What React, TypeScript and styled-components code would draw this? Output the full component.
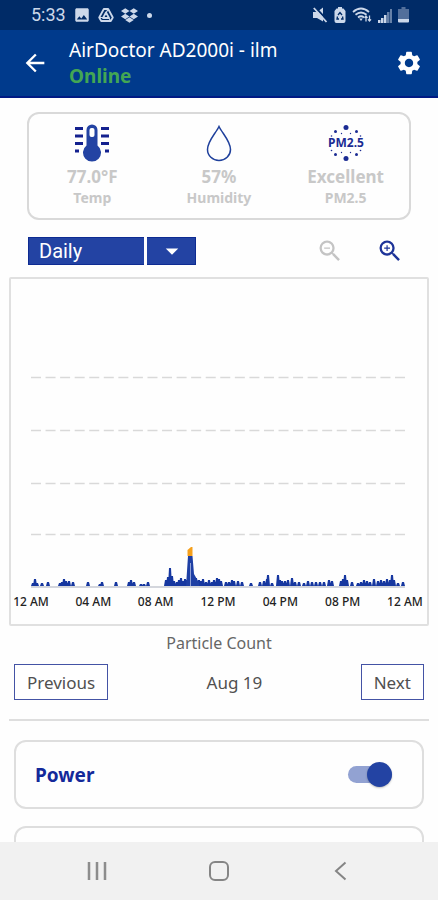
import React, { useState } from 'react';
import styled, { createGlobalStyle } from 'styled-components';
import { MdArrowBack, MdSettings, MdZoomIn, MdZoomOut, MdArrowDropDown, MdImage } from 'react-icons/md';
import { FaDropbox } from 'react-icons/fa';

const GlobalStyle = createGlobalStyle`
  * { box-sizing: border-box; }
  body { margin: 0; background: #fefefe; font-family: "Noto Sans", "Open Sans", sans-serif; }
  button, select { font: inherit; }
`;

const Screen = styled.div`
  display: flex;
  flex-direction: column;
  height: 100vh;
`;

const StatusBar = styled.div`
  display: flex;
  flex: none;
  align-items: center;
  justify-content: space-between;
  height: 30px;
  padding: 0 29px 0 31px;
  background: #002b67;
  color: #ccd8ea;
`;

const StatusGroup = styled.div<{ $gap: number }>`
  display: flex;
  align-items: center;
  gap: ${(p) => p.$gap}px;
`;

const Clock = styled.span`
  font-family: Roboto, sans-serif;
  font-size: 18px;
  line-height: 24px;
`;

const Dot = styled.span`
  width: 5px;
  height: 5px;
  margin-left: 2px;
  border-radius: 50%;
  background: currentColor;
`;

const AppBar = styled.header`
  display: flex;
  flex: none;
  align-items: center;
  height: 68px;
  padding: 0 15px 0 21px;
  border-bottom: 2px solid #001a84;
  background: #003a8c;
  color: #fff;
`;

const BarButton = styled.button`
  display: flex;
  padding: 0;
  border: 0;
  background: none;
  color: inherit;
  cursor: pointer;
`;

const Titles = styled.div`
  flex: 1;
  padding-left: 20px;
`;

const DeviceName = styled.h1`
  margin: 0;
  font-size: 19px;
  font-weight: 400;
  line-height: 26px;
`;

const DeviceState = styled.p`
  margin: 0;
  color: #43a654;
  font-size: 19px;
  font-weight: 700;
  line-height: 26px;
`;

const Content = styled.main`
  flex: 1;
  min-height: 0;
  overflow: hidden;
`;

const Readings = styled.section`
  display: grid;
  grid-template-columns: repeat(3, 1fr);
  margin: 14px 27px 16px;
  padding: 10px 0;
  border: 2px solid #d9d9d9;
  border-radius: 12px;
`;

const Reading = styled.div`
  display: flex;
  flex-direction: column;
  align-items: center;
  color: #c8c8c8;
  font-weight: 700;
`;

const ReadingValue = styled.span`
  margin-top: 4px;
  font-size: 17px;
  line-height: 22px;
`;

const ReadingLabel = styled.span`
  font-size: 14px;
  line-height: 20px;
`;

const Toolbar = styled.div`
  display: flex;
  align-items: center;
  gap: 32px;
  height: 30px;
  padding: 0 34px 0 28px;
`;

const Picker = styled.div`
  position: relative;
  display: grid;
  grid-template-columns: 116px 50px;
  gap: 2px;
  height: 28px;
  margin-right: auto;
  color: #fff;
`;

const PickerSelect = styled.select`
  grid-column: 1 / 3;
  padding: 0 10px;
  border: 1px solid #0e2b92;
  background: #2343a3;
  color: inherit;
  font-family: Roboto, sans-serif;
  font-size: 20px;
  line-height: 24px;
  appearance: none;
`;

const PickerArrow = styled.span`
  position: absolute;
  inset: 0 0 0 auto;
  display: flex;
  align-items: center;
  justify-content: center;
  width: 52px;
  border-left: 3px solid #fefefe;
  pointer-events: none;
`;

const ZoomButton = styled.button`
  display: flex;
  padding: 0;
  border: 0;
  background: none;
  color: #1d3398;
  &:disabled { color: #c4c4c4; }
`;

const ChartFrame = styled.figure`
  margin: 11px 9px 0;
  padding: 8px 0 13px;
  border: 2px solid #e0e0e0;
  border-radius: 2px;
`;

const Plot = styled.svg`
  display: block;
  width: calc(100% - 42px);
  height: 301px;
  margin: 0 auto 0 20px;
`;

const Axis = styled.div`
  display: flex;
  justify-content: space-between;
  padding: 5px 2px 0 0;
`;

const Tick = styled.span`
  width: 40px;
  color: #222;
  font-size: 12px;
  font-weight: 500;
  line-height: 18px;
  text-align: center;
  white-space: nowrap;
`;

const Caption = styled.p`
  margin: 5px 0 9px;
  color: #666;
  font-size: 16px;
  line-height: 24px;
  text-align: center;
`;

const Pager = styled.div`
  display: flex;
  align-items: center;
  justify-content: space-between;
  padding: 0 14px 19px;
  color: #505050;
  font-size: 17px;
`;

const PageButton = styled.button`
  height: 36px;
  padding: 0 12px;
  border: 1px solid #4453a5;
  background: #fff;
  color: inherit;
`;

const Divider = styled.hr`
  height: 2px;
  margin: 0 9px 19px;
  border: 0;
  background: #dedede;
`;

const Card = styled.section`
  display: flex;
  align-items: center;
  justify-content: space-between;
  height: 69px;
  margin: 0 14px 17px;
  padding: 0 30px 0 19px;
  border: 2px solid #dedede;
  border-radius: 12px;
`;

const CardLabel = styled.label`
  color: #14299a;
  font-size: 19px;
  font-weight: 700;
  line-height: 28px;
`;

const Switch = styled.input`
  display: flex;
  align-items: center;
  width: 44px;
  height: 26px;
  margin: 0;
  appearance: none;
  cursor: pointer;
  &::before {
    content: '';
    flex: 1;
    height: 17px;
    border-radius: 9px;
    background: #92a2d2;
  }
  &::after {
    content: '';
    width: 25px;
    height: 25px;
    margin-left: -25px;
    border-radius: 50%;
    background: #2343a3;
    box-shadow: 0 1px 2px rgba(0, 0, 0, 0.25);
  }
  &:not(:checked) { flex-direction: row-reverse; }
  &:not(:checked)::after { margin: 0 -25px 0 0; background: #999; }
`;

const NavBar = styled.nav`
  display: grid;
  flex: none;
  grid-template-columns: repeat(3, 1fr);
  height: 58px;
  padding: 0 36px;
  background: #f1f1f1;
`;

const NavButton = styled.button`
  display: flex;
  align-items: center;
  justify-content: center;
  padding: 0;
  border: 0;
  background: none;
`;

const DriveIcon = () => (
  <svg width="16" height="16" viewBox="0 0 16 16" fill="none" stroke="currentColor" strokeLinejoin="round">
    <path d="M5.8 2h4.4l4.6 8.5-2 3.5H3.2l-2-3.5z" strokeWidth="1.8" />
    <path d="M8 5.5l3 5.5H5z" strokeWidth="1.8" />
    <path d="M1.5 10.5h3.5M10.2 2.2L8 5.7M12.6 13.8L10.8 11" strokeWidth="1.2" />
  </svg>
);

const MuteIcon = () => (
  <svg width="15" height="16" viewBox="0 0 15 16">
    <path d="M0 5h4l6-4.500v14L4 11H0z" fill="currentColor" />
    <path d="M2 0L15 14" stroke="#002b67" strokeWidth="2" />
    <path d="M0.800 1L13.500 15" stroke="currentColor" strokeWidth="1.800" />
  </svg>
);

const BatterySaverIcon = () => (
  <svg width="12" height="16" viewBox="0 0 12 16">
    <path d="M4 0h4v1.500h1.500L11.500 4V14a2 2 0 0 1-2 2h-7a2 2 0 0 1-2-2V4l2-2.500H4z" fill="currentColor" />
    <path d="M4 8L6 5.500 8 8M8.500 9.500L9 12H7M5 12H3l.5-2.500" fill="none" stroke="#002b67" strokeWidth="1.300" />
  </svg>
);

const WifiIcon = () => (
  <svg width="20" height="16" viewBox="0 0 20 16" fill="none" stroke="currentColor" strokeWidth="1.8">
    <path d="M1 5Q9 -2 17 5M3.500 7.800Q9 3.200 14.500 7.800M6 10.500Q9 8 12 10.500" />
    <path d="M7.200 11.500h3.600L9 14z" fill="currentColor" stroke="none" />
    <path d="M14 14.500V9M12.500 10.800L14 9l1.500 1.800M17.500 8.500V14M16 12.300l1.500 1.800 1.500-1.800" strokeWidth="1.300" />
  </svg>
);

const SignalIcon = () => (
  <svg width="14" height="15" viewBox="0 0 14 15" fill="currentColor">
    <path d="M0 12h2.500v3H0zM3 10h2.500v5H3zM6 7h2.500v8H6z" />
    <path d="M9 4h2.500v11H9zM12 1h2v14h-2z" opacity="0.5" />
  </svg>
);

const BatteryIcon = () => (
  <svg width="11" height="16" viewBox="0 0 11 16" fill="currentColor">
    <path d="M3.500 0h4v2H11v10H0V2h3.500z" opacity="0.4" />
    <path d="M0 12h11v2.500a1 1 0 0 1-1 1H1a1 1 0 0 1-1-1z" />
  </svg>
);

const ThermometerIcon = () => (
  <svg width="36" height="38" viewBox="0 0 36 38">
    <path d="M12.500 6a5.500 5.500 0 0 1 11 0v15.500a9 9 0 1 1-11 0z" fill="#2343a3" />
    <rect x="15.500" y="4" width="5" height="9" rx="2" fill="#fefefe" />
    <path d="M1 4.500h8M1 12h8M1 19.500h8M1 27h4M27 4.500h8M27 12h8M27 19.500h8M31 27h4" stroke="#14218f" strokeWidth="3" />
  </svg>
);

const DropIcon = () => (
  <svg width="26" height="38" viewBox="0 0 26 38">
    <path d="M13 2.500C10 9 1.500 17 1.500 25.500a11.500 11 0 0 0 23 0C24.500 17 16 9 13 2.500z" fill="none" stroke="#1f409c" strokeWidth="1.500" />
  </svg>
);

const DOTS = [
  [20, 3.5, 2.5], [20, 34.5, 2.500], [9.500, 7.500, 1.500], [30.500, 7.500, 1.500],
  [9.500, 30.500, 1.500], [30.500, 30.500, 1.500], [15.500, 9.500, 0.700], [24.500, 9.500, 0.700],
  [15.500, 28.500, 0.700], [24.500, 28.500, 0.700], [5.500, 12, 0.800], [34.500, 12, 0.800],
  [5.500, 26.500, 0.800], [34.500, 26.500, 0.800],
];

const ParticleIcon = () => (
  <svg width="40" height="38" viewBox="0 0 40 38" fill="#1b2b93">
    {DOTS.map(([x, y, r]) => <circle key={`${x}-${y}`} cx={x} cy={y} r={r} />)}
    <text x="20" y="23" textAnchor="middle" fontFamily="Noto Sans, sans-serif" fontSize="12" fontWeight="700">PM2.5</text>
  </svg>
);

// Each sample is [position along the day, particle count height].
const SAMPLES = [
  [2, 3], [4, 7], [6, 3], [11, 3], [17, 4], [29, 3], [31, 4], [33, 7], [35, 5], [38, 5], [42, 4],
  [57, 4], [69, 2], [71, 4], [85, 4], [98, 4], [100, 6], [103, 4], [110, 2], [113, 2], [117, 4],
  [135, 6], [137, 9], [139, 18], [141, 10], [143, 5], [146, 4], [148, 6], [150, 8], [152, 5], [154, 7], [156, 6],
  [163, 10], [165, 8], [168, 6], [170, 5], [172, 7], [175, 4], [178, 6], [181, 4], [183, 6], [186, 8], [188, 7],
  [190, 5], [195, 4], [198, 4], [201, 6], [203, 5], [207, 5], [211, 4], [220, 3], [229, 4], [233, 5],
  [236, 7], [237, 11], [241, 3], [247, 11], [249, 6], [251, 5], [254, 5], [257, 6], [261, 8], [264, 4],
  [268, 4], [273, 3], [277, 5], [281, 4], [285, 4], [289, 4], [293, 4], [298, 6], [301, 5],
  [310, 5], [312, 7], [314, 11], [316, 6], [321, 4], [327, 3], [330, 4], [333, 6], [336, 5], [339, 4],
  [343, 7], [347, 5], [350, 6], [353, 5], [356, 7], [359, 6], [361, 11], [363, 6], [367, 3], [372, 4],
];
const BASE = 299;

const ParticleChart = () => (
  <Plot viewBox="0 0 374 301" preserveAspectRatio="none" role="img" aria-label="Particle count over the day">
    {[91, 144, 197, 248].map((y) => (
      <line key={y} x1="0" x2="374" y1={y - 0.5} y2={y - 0.5} stroke="#d9d9d9" strokeWidth="1.500" strokeDasharray="10 4.560" />
    ))}
    <path d={SAMPLES.map(([x, h]) => `M${x - 2} ${BASE}L${x - 1} ${BASE - h}H${x + 1}L${x + 2} ${BASE}z`).join('')} fill="#1637a0" />
    <path d="M155 299L157 269H161.500L163 287 168 296V299z" fill="#1e3fa4" />
    <path d="M159.500 276V299" stroke="#8fa0d6" strokeWidth="1" />
    <path d="M156.500 269V263L160 260H161.500V269z" fill="#f5a01c" />
    <path d="M0 300H374" stroke="#a9aebb" strokeWidth="1" />
  </Plot>
);

const TICKS = ['12 AM', '04 AM', '08 AM', '12 PM', '04 PM', '08 PM', '12 AM'];

export default function App() {
  const [power, setPower] = useState(true);
  return (
    <>
      <GlobalStyle />
      <Screen>
        <StatusBar>
          <StatusGroup $gap={7}>
            <Clock>5:33</Clock>
            <MdImage size={18} />
            <DriveIcon />
            <FaDropbox size={17} />
            <Dot />
          </StatusGroup>
          <StatusGroup $gap={6}>
            <MuteIcon />
            <BatterySaverIcon />
            <WifiIcon />
            <SignalIcon />
            <BatteryIcon />
          </StatusGroup>
        </StatusBar>
        <AppBar>
          <BarButton aria-label="Back"><MdArrowBack size={28} /></BarButton>
          <Titles>
            <DeviceName>AirDoctor AD2000i - ilm</DeviceName>
            <DeviceState>Online</DeviceState>
          </Titles>
          <BarButton aria-label="Settings"><MdSettings size={28} /></BarButton>
        </AppBar>
        <Content>
          <Readings>
            <Reading>
              <ThermometerIcon />
              <ReadingValue>77.0°F</ReadingValue>
              <ReadingLabel>Temp</ReadingLabel>
            </Reading>
            <Reading>
              <DropIcon />
              <ReadingValue>57%</ReadingValue>
              <ReadingLabel>Humidity</ReadingLabel>
            </Reading>
            <Reading>
              <ParticleIcon />
              <ReadingValue>Excellent</ReadingValue>
              <ReadingLabel>PM2.5</ReadingLabel>
            </Reading>
          </Readings>
          <Toolbar>
            <Picker>
              <PickerSelect aria-label="Period" defaultValue="Daily">
                <option>Daily</option>
              </PickerSelect>
              <PickerArrow><MdArrowDropDown size={30} /></PickerArrow>
            </Picker>
            <ZoomButton aria-label="Zoom out" disabled><MdZoomOut size={28} /></ZoomButton>
            <ZoomButton aria-label="Zoom in"><MdZoomIn size={28} /></ZoomButton>
          </Toolbar>
          <ChartFrame>
            <ParticleChart />
            <Axis>{TICKS.map((t, i) => <Tick key={i}>{t}</Tick>)}</Axis>
          </ChartFrame>
          <Caption>Particle Count</Caption>
          <Pager>
            <PageButton>Previous</PageButton>
            <span>Aug 19</span>
            <PageButton>Next</PageButton>
          </Pager>
          <Divider />
          <Card>
            <CardLabel htmlFor="power">Power</CardLabel>
            <Switch id="power" type="checkbox" role="switch" checked={power} onChange={(e) => setPower(e.target.checked)} />
          </Card>
          <Card />
        </Content>
        <NavBar>
          <NavButton aria-label="Recent apps">
            <svg width="20" height="20" viewBox="0 0 20 20"><path d="M2 1v18M10 1v18M18 1v18" stroke="#8d8d8d" strokeWidth="2.500" /></svg>
          </NavButton>
          <NavButton aria-label="Home">
            <svg width="20" height="20" viewBox="0 0 20 20"><rect x="1" y="1" width="18" height="18" rx="5" fill="none" stroke="#858585" strokeWidth="2" /></svg>
          </NavButton>
          <NavButton aria-label="Navigate back">
            <svg width="20" height="20" viewBox="0 0 20 20"><path d="M14.500 1.500L5 10l9.500 8.500" fill="none" stroke="#858585" strokeWidth="2" /></svg>
          </NavButton>
        </NavBar>
      </Screen>
    </>
  );
}
